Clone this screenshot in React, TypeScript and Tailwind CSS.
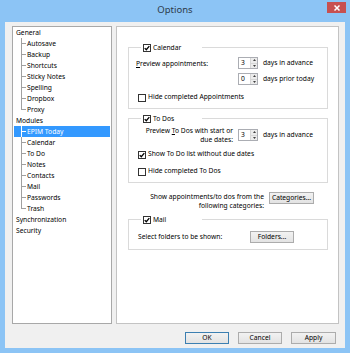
import React from "react";

function Check({ checked }: { checked?: boolean }) {
  return (
    <span className="w-[8px] h-[8px] border border-[#333333] bg-white flex items-center justify-center shrink-0">
      {checked && (
        <svg width="6" height="6" viewBox="0 0 6 6">
          <path d="M0.7 3.1 L2.3 4.7 L5.3 1.1" stroke="#000" strokeWidth="1.3" fill="none" />
        </svg>
      )}
    </span>
  );
}

function Spin({ v }: { v: string }) {
  return (
    <div className="w-[20px] h-[12px] border border-[#abadb3] bg-white flex shrink-0">
      <div className="flex-1 pl-[2px] leading-[10px]">{v}</div>
      <div className="w-[7px] flex flex-col border-l border-[#d6d6d6]">
        <div className="flex-1 bg-[#ececec] flex items-center justify-center border-b border-[#d6d6d6]">
          <svg width="3" height="2" viewBox="0 0 3 2">
            <path d="M1.5 0 L3 2 L0 2Z" fill="#404040" />
          </svg>
        </div>
        <div className="flex-1 bg-[#ececec] flex items-center justify-center">
          <svg width="3" height="2" viewBox="0 0 3 2">
            <path d="M0 0 L3 0 L1.5 2Z" fill="#404040" />
          </svg>
        </div>
      </div>
    </div>
  );
}

function Legend({ label }: { label: string }) {
  return (
    <legend className="ml-[12px] w-[61px] h-[11px]">
      <div className="flex items-center h-[11px] pl-[2px] gap-[2px]">
        <Check checked />
        <span className="leading-[11px]">{label}</span>
      </div>
    </legend>
  );
}

type Node = { t: string; lvl: number; last?: boolean; sel?: boolean };
const tree: Node[] = [
  { t: "General", lvl: 0 },
  { t: "Autosave", lvl: 1 },
  { t: "Backup", lvl: 1 },
  { t: "Shortcuts", lvl: 1 },
  { t: "Sticky Notes", lvl: 1 },
  { t: "Spelling", lvl: 1 },
  { t: "Dropbox", lvl: 1 },
  { t: "Proxy", lvl: 1, last: true },
  { t: "Modules", lvl: 0 },
  { t: "EPIM Today", lvl: 1, sel: true },
  { t: "Calendar", lvl: 1 },
  { t: "To Do", lvl: 1 },
  { t: "Notes", lvl: 1 },
  { t: "Contacts", lvl: 1 },
  { t: "Mail", lvl: 1 },
  { t: "Passwords", lvl: 1 },
  { t: "Trash", lvl: 1, last: true },
  { t: "Synchronization", lvl: 0 },
  { t: "Security", lvl: 0 },
];

function TreeRow({ n }: { n: Node }) {
  if (n.lvl === 0) {
    return <div className="h-[11px] leading-[11px] mx-[1px] pl-[2px] whitespace-nowrap">{n.t}</div>;
  }
  const line = n.sel ? "border-white" : "border-[#a0a0a0]";
  return (
    <div
      className={
        "h-[11px] mx-[1px] pl-[7px] flex whitespace-nowrap " +
        (n.sel ? "bg-[#3399ff] text-white" : "")
      }
    >
      <div className="w-[5px] h-[11px] flex flex-col shrink-0">
        <div className={"h-[6px] border-l border-b " + line}></div>
        <div className={"h-[5px] " + (n.last ? "" : "border-l " + line)}></div>
      </div>
      <span className="ml-[1px] leading-[11px]">{n.t}</span>
    </div>
  );
}

function Btn({ children, className }: { children: React.ReactNode; className: string }) {
  return (
    <div
      className={
        "h-[12px] border bg-linear-to-b from-[#f2f2f2] to-[#e3e3e3] flex items-center justify-center leading-[10px] shrink-0 " +
        className
      }
    >
      {children}
    </div>
  );
}

export default function App() {
  return (
    <div className="w-[350px] h-[353px] bg-[#8cc4f5] flex flex-col font-['Noto_Sans','Open_Sans',sans-serif] text-[6.7px] text-black">
      <div className="h-[22px] relative flex items-center justify-center">
        <span className="text-[9.5px] text-[#2d3a4a] leading-[12px] -mt-[2px]">Options</span>
        <div className="absolute right-[4px] top-[2px] w-[19px] h-[11px] bg-[#c75050] flex items-center justify-center">
          <svg width="6" height="6" viewBox="0 0 6 6">
            <path d="M0.5 0.5 L5.5 5.5 M5.5 0.5 L0.5 5.5" stroke="#fff" strokeWidth="1.5" />
          </svg>
        </div>
      </div>
      <div className="flex-1 mx-[5px] mb-[5px] bg-[#f0f0f0] flex flex-col pt-[4px]">
        <div className="flex-1 flex pl-[7px] pr-[6px] gap-[4px]">
          <div className="w-[100px] bg-white border border-[#a8a8a8] flex flex-col">
            {tree.map((n) => (
              <TreeRow key={n.t + n.lvl} n={n} />
            ))}
          </div>
          <div className="flex-1 bg-white border border-[#c3c3c3] flex flex-col">
            <fieldset className="mt-[15px] ml-[11px] mr-[10px] border border-[#dadada]">
              <Legend label="Calendar" />
              <div className="pt-[4px] pb-[5px] flex flex-col">
                <div className="flex items-center h-[12px] pl-[7px]">
                  <div className="w-[102px] whitespace-nowrap leading-[11px]">
                    <span className="underline">P</span>review appointments:
                  </div>
                  <Spin v="3" />
                  <span className="ml-[5px] whitespace-nowrap">days in advance</span>
                </div>
                <div className="flex items-center h-[12px] pl-[7px] mt-[4px]">
                  <div className="w-[102px]"></div>
                  <Spin v="0" />
                  <span className="ml-[5px] whitespace-nowrap">days prior today</span>
                </div>
                <div className="flex items-center h-[11px] pl-[9px] mt-[7px] gap-[2px]">
                  <Check />
                  <span className="whitespace-nowrap">Hide completed Appointments</span>
                </div>
              </div>
            </fieldset>
            <fieldset className="mt-[4px] ml-[11px] mr-[10px] border border-[#dadada]">
              <Legend label="To Dos" />
              <div className="pt-[2px] pb-[5px] flex flex-col">
                <div className="flex items-center pl-[7px]">
                  <div className="w-[102px] pr-[5px] text-right leading-[9px] whitespace-nowrap">
                    Preview <span className="underline">T</span>o Dos with start or
                    <br />
                    due dates:
                  </div>
                  <Spin v="3" />
                  <span className="ml-[5px] whitespace-nowrap">days in advance</span>
                </div>
                <div className="flex items-center h-[11px] pl-[9px] mt-[5px] gap-[2px]">
                  <Check checked />
                  <span className="whitespace-nowrap">Show To Do list without due dates</span>
                </div>
                <div className="flex items-center h-[11px] pl-[9px] mt-[6px] gap-[2px]">
                  <Check />
                  <span className="whitespace-nowrap">Hide completed To Dos</span>
                </div>
              </div>
            </fieldset>
            <div className="mt-[9px] pl-[30px] flex items-start">
              <div className="w-[117px] text-right leading-[9px] whitespace-nowrap">
                Show appointments/to dos from the
                <br />
                following categories:
              </div>
              <Btn className="ml-[5px] w-[45px] border-[#acacac]">Categories...</Btn>
            </div>
            <fieldset className="mt-[4px] ml-[11px] mr-[10px] border border-[#dadada]">
              <Legend label="Mail" />
              <div className="pt-[6px] pb-[6px] flex items-center pl-[9px]">
                <div className="w-[112px] whitespace-nowrap">Select folders to be shown:</div>
                <Btn className="w-[44px] border-[#acacac]">Folders...</Btn>
              </div>
            </fieldset>
          </div>
        </div>
        <div className="mt-[8px] mb-[4px] flex justify-end gap-[9px] pr-[9px]">
          <Btn className="w-[44px] border-[#3c7fb1]">OK</Btn>
          <Btn className="w-[44px] border-[#acacac]">Cancel</Btn>
          <Btn className="w-[45px] border-[#acacac]">Apply</Btn>
        </div>
      </div>
    </div>
  );
}
